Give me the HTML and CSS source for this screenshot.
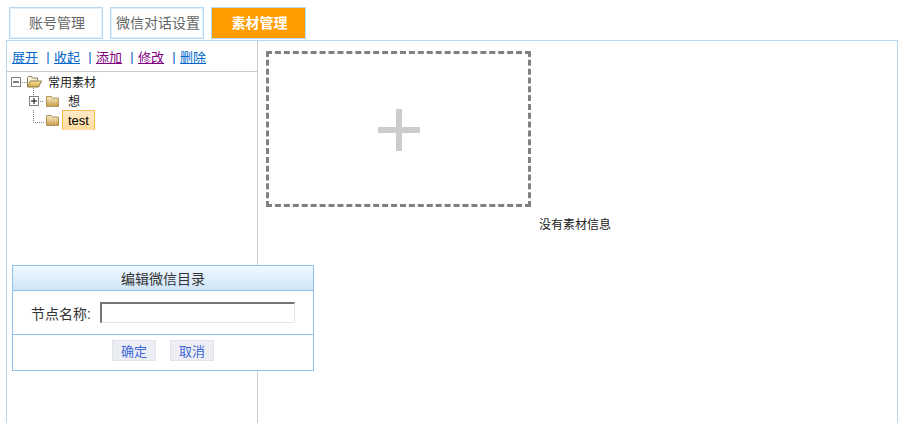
FILE: index.html
```html
<!DOCTYPE html>
<html lang="zh-CN">
<head>
  <meta charset="UTF-8">
  <title>素材管理</title>
  <link rel="stylesheet" href="styles.css">
</head>
<body>

  <!-- Tabs -->
  <div class="tabs">
    <a class="tab">账号管理</a>
    <a class="tab">微信对话设置</a>
    <a class="tab active">素材管理</a>
  </div>

  <div class="panel">
    <!-- Left: folder tree -->
    <div class="side">
      <div class="toolbar">
        <a class="link">展开</a><span class="sep">|</span>
        <a class="link">收起</a><span class="sep">|</span>
        <a class="link visited">添加</a><span class="sep">|</span>
        <a class="link visited">修改</a><span class="sep">|</span>
        <a class="link">删除</a>
      </div>
      <div class="tree">
        <div class="node root">
          <svg class="toggle" width="10" height="10" viewBox="0 0 10 10">
            <rect x="0.5" y="0.5" width="9" height="9" fill="#fff" stroke="#808080"/>
            <path d="M2 5h6" stroke="#000"/>
          </svg>
          <svg class="dots" width="6" height="10" viewBox="0 0 6 10">
            <path d="M1 5.5h5" stroke="#808080" stroke-dasharray="1 1"/>
          </svg>
          <svg class="folder" width="15" height="13" viewBox="0 0 15 13">
            <defs>
              <linearGradient id="fold-open" x1="0" y1="0" x2="0" y2="1">
                <stop offset="0" stop-color="#f7e3a0"/>
                <stop offset="1" stop-color="#d9a73f"/>
              </linearGradient>
            </defs>
            <path d="M0.500 12V2.500l1-1h3l1 1.500h5v2.500" fill="#f8f0d8" stroke="#8c8060"/>
            <path d="M0.500 12l3-6h11l-3 6z" fill="url(#fold-open)" stroke="#8c7a48"/>
          </svg>
          <span class="name">常用素材</span>
        </div>
        <div class="node child">
          <svg class="line" width="1" height="10" viewBox="0 0 1 10">
            <path d="M0.5 0v10" stroke="#808080" stroke-dasharray="1 1"/>
          </svg>
          <svg class="toggle" width="10" height="10" viewBox="0 0 10 10">
            <rect x="0.5" y="0.500" width="9" height="9" fill="#fff" stroke="#808080"/>
            <path d="M2 5h6M5 2v6" stroke="#000"/>
          </svg>
          <svg class="dots" width="7" height="10" viewBox="0 0 7 10">
            <path d="M1 5.500h4" stroke="#808080" stroke-dasharray="1 1"/>
          </svg>
          <svg class="folder" width="13" height="12" viewBox="0 0 13 12">
            <defs>
              <linearGradient id="fold" x1="0" y1="0" x2="0" y2="1">
                <stop offset="0" stop-color="#f8edc4"/>
                <stop offset="1" stop-color="#c4923a"/>
              </linearGradient>
            </defs>
            <path d="M0.500 11.500V1.500h5l1 1.500h6v8.500z" fill="url(#fold)" stroke="#b0965c"/>
            <path d="M3.500 4v7M6.500 4v7M9.500 4v7" stroke="#fff" stroke-opacity="0.25"/>
          </svg>
          <span class="name cjk">想</span>
        </div>
        <div class="node child last">
          <svg class="elbow" width="13" height="20" viewBox="0 0 13 20">
            <path d="M0.500 0v12.500H12" fill="none" stroke="#808080" stroke-dasharray="1 1"/>
          </svg>
          <svg class="folder" width="13" height="12" viewBox="0 0 13 12">
            <path d="M0.500 11.500V1.500h5l1 1.500h6v8.500z" fill="url(#fold)" stroke="#b0965c"/>
            <path d="M3.500 4v7M6.500 4v7M9.500 4v7" stroke="#fff" stroke-opacity="0.25"/>
          </svg>
          <span class="name selected">test</span>
        </div>
      </div>
    </div>

    <!-- Right: material list -->
    <div class="main">
      <div class="add-box">
        <span class="plus"></span>
      </div>
      <div class="empty">没有素材信息</div>
    </div>
  </div>

  <!-- Edit dialog -->
  <div class="dialog">
    <div class="dialog-title">编辑微信目录</div>
    <div class="dialog-body">
      <label class="field-label" for="nodeName">节点名称:</label>
      <input type="text" id="nodeName" class="field">
    </div>
    <div class="dialog-foot">
      <button class="btn">确定</button>
      <button class="btn">取消</button>
    </div>
  </div>

</body>
</html>
```

FILE: styles.css
```css
html, body {
  height: 100%;
}

body {
  margin: 0;
  height: 423px;
  overflow: hidden;
  background-color: #fff;
  color: #333;
  font-family: "Liberation Sans", "Noto Sans CJK SC", sans-serif;
  font-size: 12px;
}

.tabs {
  display: flex;
  gap: 7px;
  height: 33px;
  padding: 7px 0 0 9px;
  box-sizing: content-box;
}

.tab {
  width: 94px;
  height: 32px;
  padding-left: 2px;
  box-sizing: border-box;
  border: 1px solid #b5d8f5;
  box-shadow: inset 0 0 0 1px #e2f0fb;
  background-color: #fff;
  color: #666;
  font-size: 14px;
  line-height: 31px;
  text-align: center;
}

.tab.active {
  width: 95px;
  box-shadow: none;
  background-color: #ff9c00;
  color: #fff;
  font-weight: bold;
}

.panel {
  display: flex;
  width: 892px;
  height: 383px;
  margin-left: 6px;
  box-sizing: border-box;
  border: 1px solid #b5d8f5;
  border-bottom: none;
}

.side {
  width: 250px;
  flex-shrink: 0;
  border-right: 1px solid #ccc;
}

.toolbar {
  display: flex;
  align-items: center;
  height: 31px;
  padding-left: 5px;
  box-sizing: border-box;
  border-bottom: 1px solid #ccc;
  font-size: 13px;
}

.link {
  color: #0066cc;
  text-decoration: underline;
}

.link.visited {
  color: #800080;
}

.sep {
  width: 16px;
  padding-left: 4px;
  box-sizing: border-box;
  text-align: center;
  color: #0066cc;
}

.tree {
  color: #222;
}

.node {
  display: flex;
  align-items: center;
  height: 19px;
}

.root {
  padding-left: 4px;
}

.root .name {
  margin-left: 6px;
}

.child {
  position: relative;
  padding-left: 22px;
}

.child .line {
  position: absolute;
  left: 26px;
  top: -3px;
}

.child .name {
  margin-left: 9px;
}

.child.last {
  padding-left: 26px;
  height: 20px;
}

.child.last .name {
  margin-left: 3px;
}

.selected {
  height: 20px;
  width: 33px;
  box-sizing: border-box;
  padding-left: 5px;
  border: 1px solid #ffb951;
  border-bottom: none;
  background: linear-gradient(#ffebc8, #ffdc9c);
  font-size: 13px;
  line-height: 20px;
  color: #000;
}

.main {
  flex: 1;
  padding: 10px 0 0 8px;
}

.add-box {
  display: flex;
  align-items: center;
  justify-content: center;
  width: 265px;
  height: 156px;
  box-sizing: border-box;
  border: 3px dashed #808080;
}

.plus {
  position: relative;
  width: 42px;
  height: 6px;
  margin-top: 2px;
  background-color: #ccc;
}

.plus::after {
  content: "";
  position: absolute;
  left: 18px;
  top: -18px;
  width: 6px;
  height: 42px;
  background-color: #ccc;
}

.empty {
  margin: 10px 0 0 -8px;
  padding-right: 5px;
  text-align: center;
  line-height: 16px;
  color: #222;
}

.dialog {
  position: absolute;
  left: 12px;
  top: 265px;
  width: 302px;
  height: 106px;
  box-sizing: border-box;
  border: 1px solid #90c4f0;
  background-color: #fff;
}

.dialog-title {
  height: 25px;
  box-sizing: border-box;
  border-bottom: 1px solid #90c4f0;
  background: linear-gradient(#f1f8fe, #cfe5f9);
  font-size: 14px;
  line-height: 26px;
  text-align: center;
}

.dialog-body {
  display: flex;
  align-items: center;
  height: 44px;
  padding-left: 18px;
  box-sizing: border-box;
  border-bottom: 1px solid #90c4f0;
}

.field-label {
  width: 69px;
  font-size: 14px;
}

.field {
  width: 195px;
  height: 21px;
  padding: 0;
  box-sizing: border-box;
  border-style: solid;
  border-width: 2px 1px 1px 2px;
  border-color: #767676 #e3e3e3 #e3e3e3 #767676;
}

.dialog-foot {
  display: flex;
  justify-content: center;
  gap: 14px;
  padding: 5px 0 0 0;
}

.btn {
  width: 44px;
  height: 21px;
  padding: 0;
  border: 1px solid #e0e3e8;
  background-color: #eceef3;
  color: #3f66d8;
  font-family: inherit;
  font-size: 13px;
}
```
